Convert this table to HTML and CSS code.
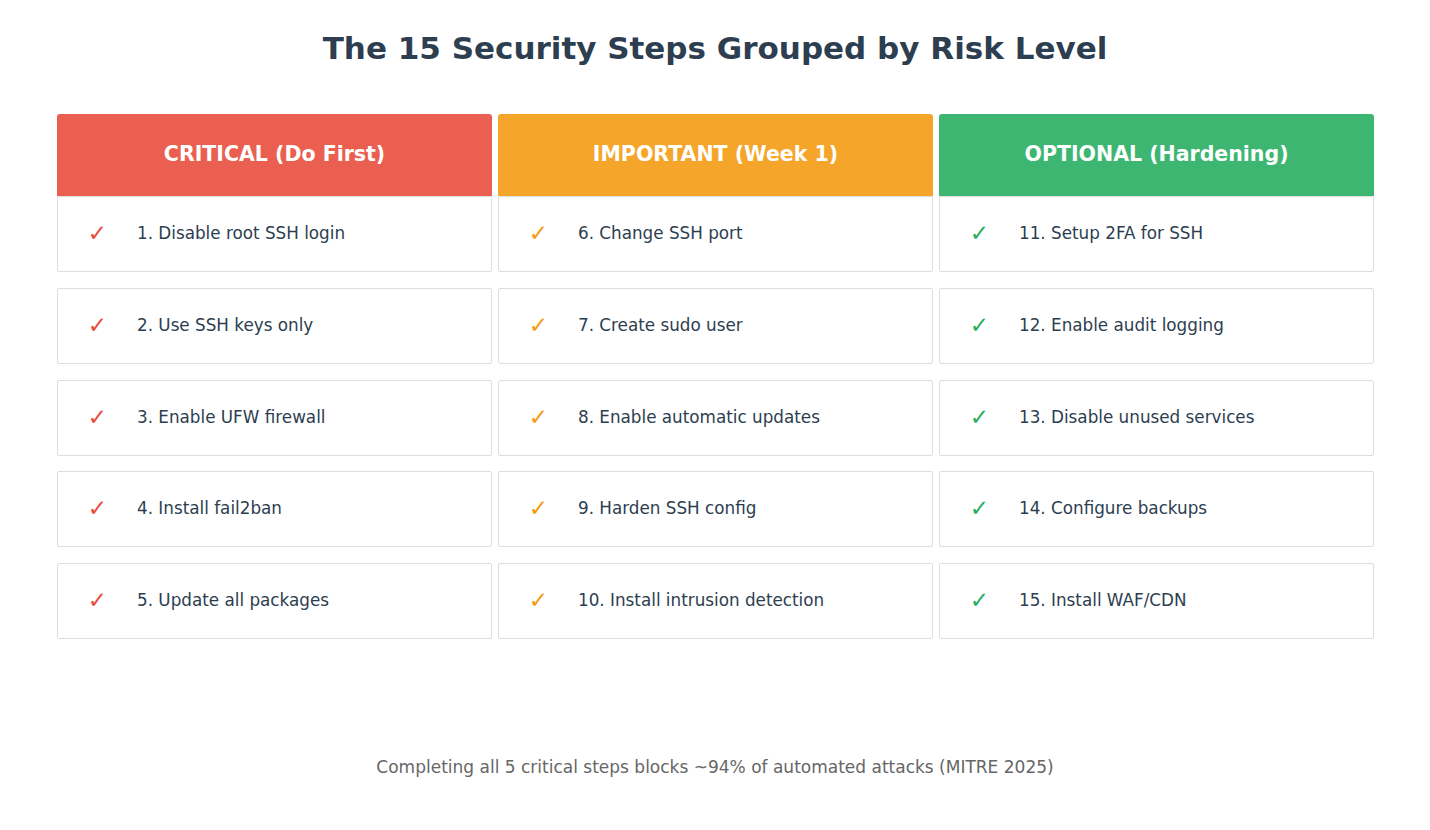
FILE: index.html
```html
<!DOCTYPE html>
<html lang="en">
<head>
    <meta charset="UTF-8">
    <meta name="viewport" content="width=device-width, initial-scale=1.0">
    <title>The 15 Security Steps Grouped by Risk Level</title>
    <link rel="stylesheet" href="styles.css">
</head>
<body>
    <h1 class="title">The 15 Security Steps Grouped by Risk Level</h1>

    <div class="grid">
        <!-- Krytyczne -->
        <div class="column critical">
            <div class="column-head">CRITICAL (Do First)</div>
            <div class="step first"><span class="check">✓</span><span class="label">1. Disable root SSH login</span></div>
            <div class="step"><span class="check">✓</span><span class="label">2. Use SSH keys only</span></div>
            <div class="step"><span class="check">✓</span><span class="label">3. Enable UFW firewall</span></div>
            <div class="step"><span class="check">✓</span><span class="label">4. Install fail2ban</span></div>
            <div class="step"><span class="check">✓</span><span class="label">5. Update all packages</span></div>
        </div>

        <!-- Ważne -->
        <div class="column important">
            <div class="column-head">IMPORTANT (Week 1)</div>
            <div class="step first"><span class="check">✓</span><span class="label">6. Change SSH port</span></div>
            <div class="step"><span class="check">✓</span><span class="label">7. Create sudo user</span></div>
            <div class="step"><span class="check">✓</span><span class="label">8. Enable automatic updates</span></div>
            <div class="step"><span class="check">✓</span><span class="label">9. Harden SSH config</span></div>
            <div class="step"><span class="check">✓</span><span class="label">10. Install intrusion detection</span></div>
        </div>

        <!-- Opcjonalne -->
        <div class="column optional">
            <div class="column-head">OPTIONAL (Hardening)</div>
            <div class="step first"><span class="check">✓</span><span class="label">11. Setup 2FA for SSH</span></div>
            <div class="step"><span class="check">✓</span><span class="label">12. Enable audit logging</span></div>
            <div class="step"><span class="check">✓</span><span class="label">13. Disable unused services</span></div>
            <div class="step"><span class="check">✓</span><span class="label">14. Configure backups</span></div>
            <div class="step"><span class="check">✓</span><span class="label">15. Install WAF/CDN</span></div>
        </div>
    </div>

    <div class="footnote">Completing all 5 critical steps blocks ~94% of automated attacks (MITRE 2025)</div>
</body>
</html>
```

FILE: styles.css
```css
body {
    margin: 0;
    font-family: "DejaVu Sans", Verdana, sans-serif;
    background-color: white;
    color: #2c3e50;
}

.title {
    margin: 0;
    padding-top: 27px;
    height: 45px;
    line-height: 42px;
    font-size: 31px;
    font-weight: bold;
    text-align: center;
    color: #2c3e50;
}

.grid {
    display: grid;
    grid-template-columns: repeat(3, 435px);
    column-gap: 6px;
    margin: 42px 0 0 57px;
}

.column {
    display: flex;
    flex-direction: column;
}

.column-head {
    height: 80px;
    padding-bottom: 2px;
    display: flex;
    align-items: center;
    justify-content: center;
    border-radius: 3px 3px 0 0;
    color: white;
    font-size: 20.5px;
    font-weight: bold;
}

.critical .column-head {
    background-color: #eb5f51;
}

.important .column-head {
    background-color: #f5a62a;
}

.optional .column-head {
    background-color: #3db672;
}

.step {
    height: 72px;
    padding-bottom: 2px;
    margin-top: 15.75px;
    display: flex;
    align-items: center;
    border: 1px solid #dddddd;
    border-radius: 2px;
    background-color: white;
}

.step.first {
    margin-top: 0;
}

.check {
    width: 79px;
    text-align: center;
    font-size: 23px;
}

.critical .check {
    color: #e74c3c;
}

.important .check {
    color: #f39c12;
}

.optional .check {
    color: #27ae60;
}

.label {
    font-size: 16.8px;
    color: #2c3e50;
}

.footnote {
    margin-top: 118px;
    text-align: center;
    font-size: 17px;
    color: #666666;
}
```
